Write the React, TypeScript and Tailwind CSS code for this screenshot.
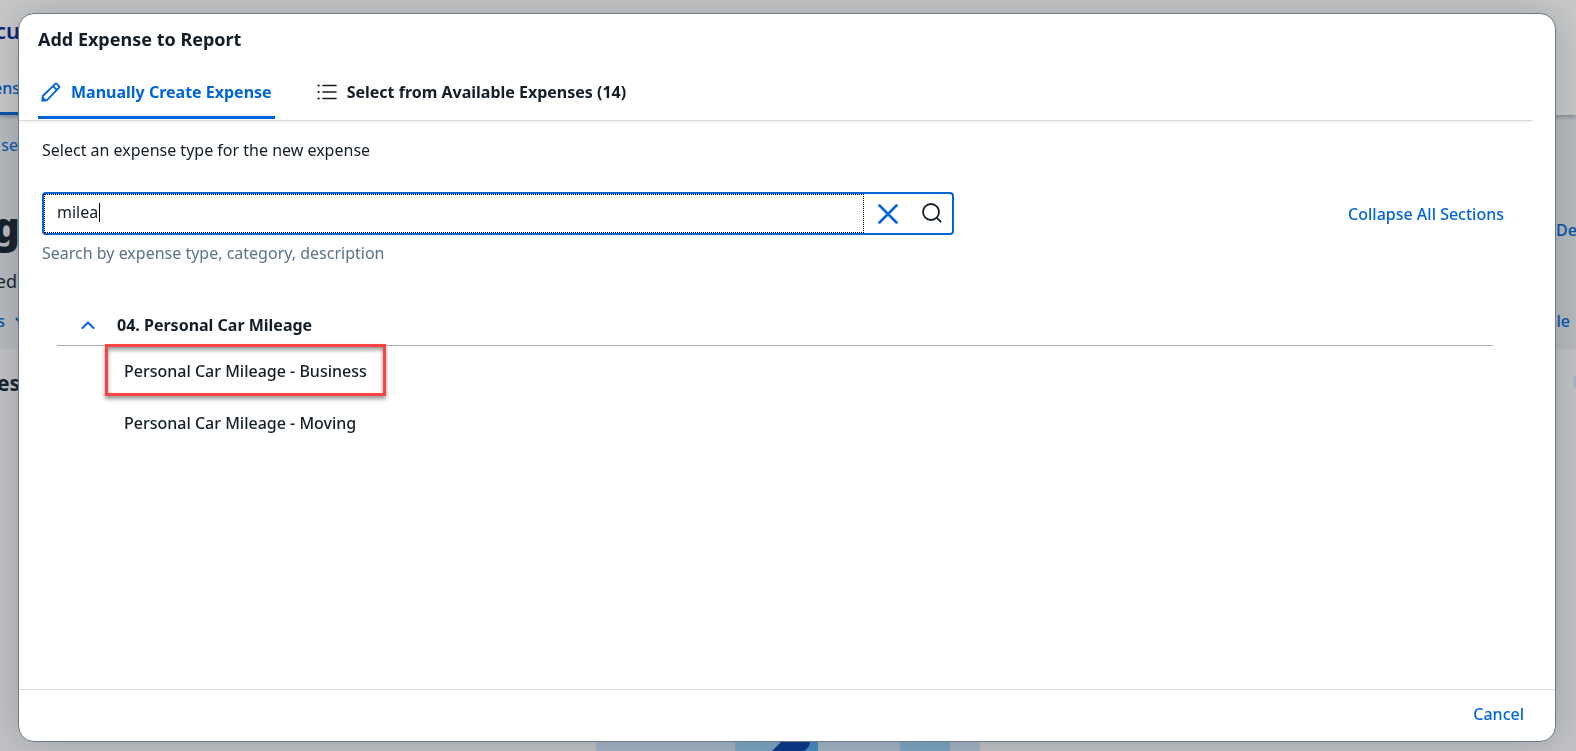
import { useState } from 'react';

const initialQuery = 'milea';
const expenseTypes = ['Personal Car Mileage - Business', 'Personal Car Mileage - Moving'];

function PencilIcon() {
  return (
    <svg viewBox="0 0 20 20" className="size-5" fill="none" stroke="currentColor" strokeWidth="1.8" strokeLinejoin="round" aria-hidden="true">
      <path d="M1.2 18.800l.6-4.800L14.300 1.900a1 1 0 0 1 1.400 0l2.400 2.400a1 1 0 0 1 0 1.400L6 18.200z" />
      <path d="M12 4.200l3.800 3.800" />
      <path d="M1.600 15.600l2.800 2.800z" fill="currentColor" />
    </svg>
  );
}

function ListIcon() {
  return (
    <svg viewBox="0 0 20 20" className="size-5" fill="none" stroke="currentColor" strokeWidth="1.6" strokeLinecap="round" aria-hidden="true">
      <path d="M6 3.500h13M6 10h13M6 16.500h13" />
      <path d="M1.500 3.500h.2M1.500 10h.2M1.500 16.500h.2" strokeWidth="2.2" />
    </svg>
  );
}

// ─── Page behind the dialog ───────────────────────────────────────────────────
function ReportPage() {
  return (
    <div className="flex h-screen flex-col overflow-hidden bg-[#c3c4c6] text-base text-[#131e29]" aria-hidden="true">
      <header className="relative flex h-[115px] shrink-0 flex-col items-start justify-between bg-[#c9caca] shadow-[0_2px_4px_rgba(60,70,90,0.4)]">
        <span className="flex w-5 justify-end pt-[14px] text-[22px] leading-8 font-semibold text-[#00237a]">cu</span>
        <span className="flex w-5 justify-end border-b-[3px] border-[#0052ad] pb-3 font-medium text-[#0052ad]">ens</span>
      </header>
      <div className="flex h-[234px] shrink-0 justify-between bg-[#b9bbc0]">
        <div className="flex w-5 flex-col items-end">
          <span className="pt-[18px] pr-[2px] leading-6 text-[#0052ad]">se</span>
          <span className="pt-10 text-[42px] leading-[60px] font-black">g</span>
          <span className="pt-[10px] pr-[3px] text-lg leading-7">ed</span>
          <span className="flex items-center gap-[10px] pt-[14px] leading-6 font-medium text-[#0052ad]">
            s
            <svg viewBox="0 0 12 12" className="-mr-[7px] size-3 shrink-0" fill="none" stroke="currentColor" strokeWidth="2">
              <path d="M1 3l5 6 5-6" />
            </svg>
          </span>
        </div>
        <div className="flex w-5 flex-col pt-[103px] font-medium text-[#0052ad]">
          <span>De</span>
          <span className="flex w-[14px] justify-end pt-[67px]">ple</span>
        </div>
      </div>
      <div className="flex items-start justify-between pt-5">
        <span className="flex w-5 justify-end text-[21px] leading-7 font-bold">es</span>
        <span className="mt-[7px] h-3 w-[3px] bg-[#a9b9cc]" />
      </div>
      <svg viewBox="0 0 384 84" className="mt-auto h-[84px] w-96 shrink-0 self-center">
        <rect width="384" height="84" fill="#a4b4c4" />
        <rect x="139" width="83" height="84" fill="#7ba6c4" />
        <rect x="186" width="36" height="84" fill="#438cc0" />
        <path d="M176 84L186 74H214Q214 80 208 84Z" fill="#053486" />
        <rect x="304" width="50" height="84" fill="#7ba6c4" />
      </svg>
    </div>
  );
}

// ─── Dialog ───────────────────────────────────────────────────────────────────
export default function App() {
  const [query, setQuery] = useState(initialQuery);
  const [open, setOpen] = useState(true);

  return (
    <div className="font-['Noto_Sans',sans-serif]">
      <ReportPage />

      <div className="fixed inset-0 flex pt-[13px] pr-5 pb-[9px] pl-[18px]">
        <div
          role="dialog"
          aria-labelledby="dialog-title"
          className="flex flex-1 flex-col rounded-2xl border border-[#6b7986] bg-white text-base text-[#131e29] shadow-[0_0_40px_rgba(60,70,80,0.3)]"
        >
          <h1 id="dialog-title" className="px-[19px] pt-[11px] text-lg leading-7 font-bold">
            Add Expense to Report
          </h1>

          <div role="tablist" className="mt-[13px] mr-[23px] flex h-[55px] gap-[42px] border-b border-[#d9d9d9] pl-[19px] shadow-[0_2px_2px_rgba(0,0,0,0.04)]">
            <button type="button" role="tab" aria-selected="true" className="mb-px flex items-center gap-[10px] border-b-[3px] border-[#0064d9] px-[3px] pt-[2px] font-bold text-[#0064d9]">
              <PencilIcon />
              Manually Create Expense
            </button>
            <button type="button" role="tab" aria-selected="false" className="mb-px flex items-center gap-[10px] border-b-[3px] border-transparent pt-[2px] font-bold">
              <ListIcon />
              Select from Available Expenses (14)
            </button>
          </div>

          <main className="flex-1 pr-[51px] pl-[23px]">
            <p className="pt-[17px] leading-6">Select an expense type for the new expense</p>

            <div className="mt-[30px] flex items-center justify-between">
              <div className="relative flex h-[43px] w-[63%] max-w-[912px] rounded border-2 border-[#0064d9]">
                <input
                  aria-label="Search expense types"
                  aria-describedby="search-hint"
                  autoFocus
                  value={query}
                  onChange={(e) => setQuery(e.target.value)}
                  className="min-w-0 flex-1 border border-dotted border-black px-3 pb-1 outline-none"
                />
                {query === initialQuery && <span className="absolute top-[9px] left-[55px] h-[19px] w-px bg-black" />}
                <button type="button" aria-label="Clear" onClick={() => setQuery('')} className="flex w-12 items-center justify-center text-[#0064d9]">
                  <svg viewBox="0 0 20 20" className="size-5" stroke="currentColor" strokeWidth="2.6" strokeLinecap="round" aria-hidden="true">
                    <path d="M1.500 1.500l17 17M18.500 1.500l-17 17" />
                  </svg>
                </button>
                <button type="button" aria-label="Search" className="flex w-10 items-center justify-center pb-[2px]">
                  <svg viewBox="0 0 20 20" className="size-5" fill="none" stroke="currentColor" strokeWidth="1.8" strokeLinecap="round" aria-hidden="true">
                    <circle cx="9" cy="9" r="8" />
                    <path d="M14.800 14.800l3.900 3.900" />
                  </svg>
                </button>
              </div>
              <button type="button" className="font-medium text-[#0064d9]">Collapse All Sections</button>
            </div>
            <p id="search-hint" className="pt-[6px] leading-6 text-[#5b738b]">
              Search by expense type, category, description
            </p>

            <section className="mt-12 pr-[11px] pl-[15px]">
              <h2 className="border-b border-[#a2adb8] pb-2 leading-6 font-bold">
                <button type="button" aria-expanded={open} onClick={() => setOpen(!open)} className="flex items-center gap-[22px] pl-6">
                  <svg viewBox="0 0 14 14" className="size-[14px] text-[#0064d9]" fill="none" stroke="currentColor" strokeWidth="2" strokeLinecap="round" strokeLinejoin="round" aria-hidden="true">
                    <path d="M1.500 10L7 4.500l5.500 5.500" />
                  </svg>
                  04. Personal Car Mileage
                </button>
              </h2>
              {open && (
                <ul className="-mt-[2px] flex flex-col items-start pl-12">
                  {expenseTypes.map((type, i) => (
                    <li
                      key={type}
                      className={
                        i === 0
                          ? 'border-[3px] border-[#fb4245] shadow-[0_3px_4px_rgba(0,0,0,0.4),inset_0_3px_4px_rgba(0,0,0,0.4)]'
                          : 'border-[3px] border-transparent'
                      }
                    >
                      <button type="button" className="h-[46px] px-4 pt-[2px] font-medium">{type}</button>
                    </li>
                  ))}
                </ul>
              )}
            </section>
          </main>

          <footer className="flex h-[52px] items-center justify-end border-t border-[#d9d9d9] pr-[31px] pb-1">
            <button type="button" className="font-medium text-[#0064d9]">Cancel</button>
          </footer>
        </div>
      </div>
    </div>
  );
}
